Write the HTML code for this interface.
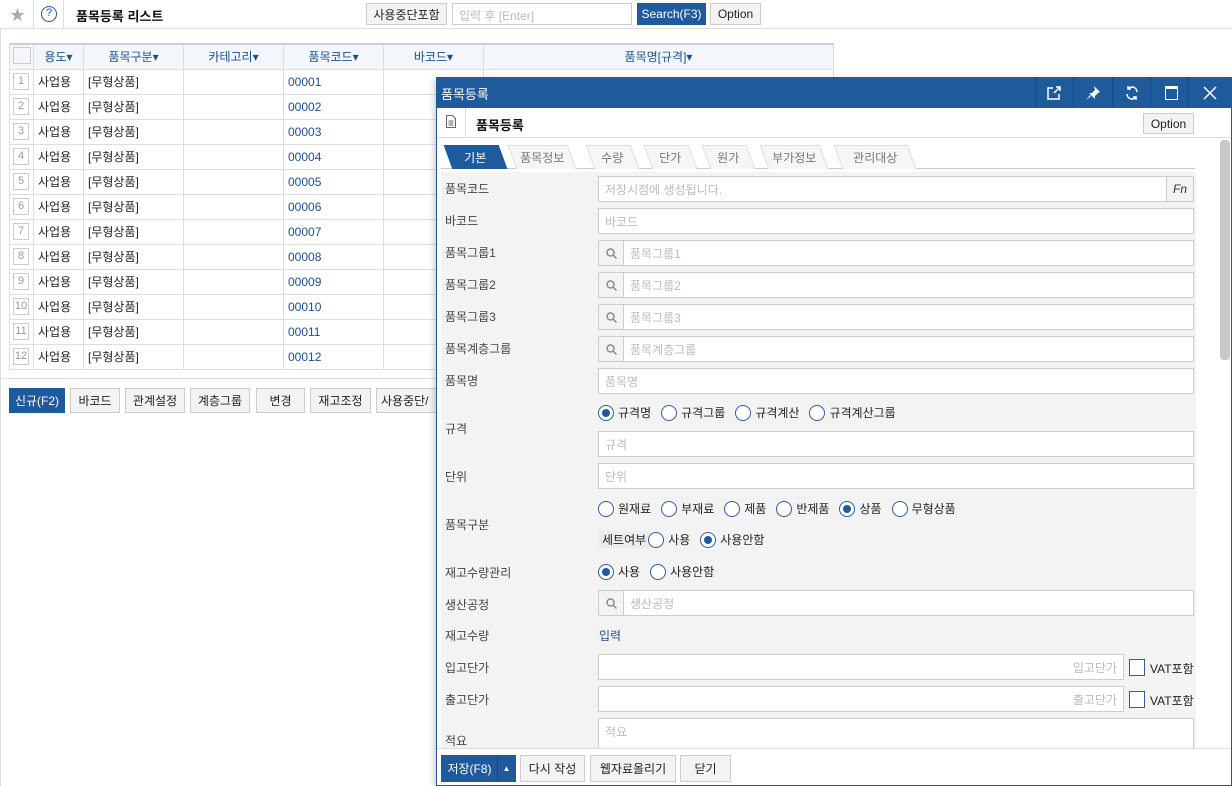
<!DOCTYPE html>
<html><head><meta charset="utf-8"><style>
*{box-sizing:border-box;margin:0;padding:0}
body{width:1232px;height:786px;overflow:hidden;background:#fff;font-family:"Liberation Sans","Noto Sans CJK KR",sans-serif;font-size:12px;color:#222;position:relative}
.a{position:absolute}
.btn{position:absolute;height:25px;border:1px solid #ccc;background:#f3f3f3;font-size:12px;display:flex;align-items:center;justify-content:center;color:#222}
.blue{background:#1e5a9c;border-color:#1e5a9c;color:#fff}
table{border-collapse:collapse;position:absolute;left:9px;top:43px;table-layout:fixed}
td,th{border:1px solid #ddd;height:25px;font-size:12px;white-space:nowrap;overflow:hidden}
th{background:#f3f6fa;color:#1e4f8c;font-weight:normal;border-top:2px solid #c5cfdb}
td{padding-left:4px}
td.n{padding:0 3px}
.nb{display:inline-block;width:16px;height:17px;border:1px solid #ccc;color:#999;font-size:11px;text-align:center;line-height:15px}
.code{color:#1e4f8c}
.lab{position:absolute;left:445px;font-size:12px;color:#444}
.inp{position:absolute;left:598px;width:596px;height:26px;border:1px solid #ccc;background:#fff;color:#bbb;font-size:12px;padding-left:6px;display:flex;align-items:center}
.srch{padding-left:0}
.srch .ic{width:25px;height:100%;border-right:1px solid #ccc;background:#f3f3f3;display:flex;align-items:center;justify-content:center;margin-right:6px}
.rads{position:absolute;left:598px;display:flex;align-items:center;font-size:12px;color:#222}
.r{width:16px;height:16px;border:1px solid #2a5e9c;border-radius:50%;background:#fff;margin-right:4px;display:inline-flex;align-items:center;justify-content:center}
.r.on::after{content:"";width:8px;height:8px;border-radius:50%;background:#1e5a9c}
.rads span.t{margin-right:10px}
.tab{position:absolute;top:145px;height:24px;font-size:12px;color:#777;display:flex;align-items:center;justify-content:center;background:#f6f6f6;border:1px solid #ddd;border-bottom:none;transform:skewX(20deg)}
.tab span{transform:skewX(-20deg)}
</style></head><body>
<!-- top bar -->
<div class="a" style="left:0;top:0;width:1232px;height:29px;border-bottom:1px solid #ddd"></div>
<div class="a" style="left:33px;top:0;width:1px;height:29px;background:#ddd"></div>
<div class="a" style="left:63px;top:0;width:1px;height:29px;background:#ddd"></div>
<div class="a" style="left:10px;top:4px;color:#aaa;font-size:15px">★</div>
<div class="a" style="left:41px;top:6px;width:16px;height:16px;border:1.5px solid #1e5a9c;border-radius:50%;color:#1e5a9c;font-size:11px;text-align:center;line-height:13px">?</div>
<div class="a" style="left:76px;top:6px;font-size:13px;font-weight:bold;color:#111">품목등록 리스트</div>
<div class="btn" style="left:366px;top:3px;width:81px;height:22px">사용중단포함</div>
<div class="a" style="left:452px;top:3px;width:180px;height:22px;border:1px solid #ccc;color:#bbb;padding:3px 6px;font-size:12px">입력 후 [Enter]</div>
<div class="btn blue" style="left:637px;top:3px;width:69px;height:22px">Search(F3)</div>
<div class="btn" style="left:710px;top:3px;width:51px;height:22px">Option</div>
<div class="a" style="left:0;top:29px;width:1px;height:757px;background:#ddd"></div>

<table>
<colgroup><col style="width:24px"><col style="width:50px"><col style="width:100px"><col style="width:100px"><col style="width:100px"><col style="width:100px"><col style="width:350px"></colgroup>
<tr><th><span class="nb" style="width:18px"></span></th><th>용도▾</th><th>품목구분▾</th><th>카테고리▾</th><th>품목코드▾</th><th>바코드▾</th><th>품목명[규격]▾</th></tr>
<tr><td class="n"><span class="nb">1</span></td><td>사업용</td><td>[무형상품]</td><td></td><td class="code">00001</td><td></td><td></td></tr>
<tr><td class="n"><span class="nb">2</span></td><td>사업용</td><td>[무형상품]</td><td></td><td class="code">00002</td><td></td><td></td></tr>
<tr><td class="n"><span class="nb">3</span></td><td>사업용</td><td>[무형상품]</td><td></td><td class="code">00003</td><td></td><td></td></tr>
<tr><td class="n"><span class="nb">4</span></td><td>사업용</td><td>[무형상품]</td><td></td><td class="code">00004</td><td></td><td></td></tr>
<tr><td class="n"><span class="nb">5</span></td><td>사업용</td><td>[무형상품]</td><td></td><td class="code">00005</td><td></td><td></td></tr>
<tr><td class="n"><span class="nb">6</span></td><td>사업용</td><td>[무형상품]</td><td></td><td class="code">00006</td><td></td><td></td></tr>
<tr><td class="n"><span class="nb">7</span></td><td>사업용</td><td>[무형상품]</td><td></td><td class="code">00007</td><td></td><td></td></tr>
<tr><td class="n"><span class="nb">8</span></td><td>사업용</td><td>[무형상품]</td><td></td><td class="code">00008</td><td></td><td></td></tr>
<tr><td class="n"><span class="nb">9</span></td><td>사업용</td><td>[무형상품]</td><td></td><td class="code">00009</td><td></td><td></td></tr>
<tr><td class="n"><span class="nb">10</span></td><td>사업용</td><td>[무형상품]</td><td></td><td class="code">00010</td><td></td><td></td></tr>
<tr><td class="n"><span class="nb">11</span></td><td>사업용</td><td>[무형상품]</td><td></td><td class="code">00011</td><td></td><td></td></tr>
<tr><td class="n"><span class="nb">12</span></td><td>사업용</td><td>[무형상품]</td><td></td><td class="code">00012</td><td></td><td></td></tr>
</table>
<div class="a" style="left:0;top:378px;width:436px;height:1px;background:#ddd"></div>
<div class="btn blue" style="left:9px;top:388px;width:56px">신규(F2)</div>
<div class="btn" style="left:70px;top:388px;width:50px">바코드</div>
<div class="btn" style="left:125px;top:388px;width:60px">관계설정</div>
<div class="btn" style="left:190px;top:388px;width:60px">계층그룹</div>
<div class="btn" style="left:256px;top:388px;width:49px">변경</div>
<div class="btn" style="left:310px;top:388px;width:61px">재고조정</div>
<div class="btn" style="left:376px;top:388px;width:70px;justify-content:flex-start;padding-left:4px">사용중단/</div>

<!-- modal -->
<div class="a" style="left:436px;top:77px;width:796px;height:709px;background:#fff;border:1px solid #1e5a9c;box-shadow:-2px 2px 6px rgba(0,0,0,.2)"></div>
<div class="a" style="left:436px;top:77px;width:796px;height:31px;background:#1e5a9c"></div>
<div class="a" style="left:441px;top:84px;color:#fff;font-size:13px">품목등록</div>
<div class="a" style="left:1035px;top:77px;width:1px;height:31px;background:#174a82"></div>
<div class="a" style="left:1073px;top:77px;width:1px;height:31px;background:#174a82"></div>
<div class="a" style="left:1112px;top:77px;width:1px;height:31px;background:#174a82"></div>
<div class="a" style="left:1150px;top:77px;width:1px;height:31px;background:#174a82"></div>
<div class="a" style="left:1188px;top:77px;width:1px;height:31px;background:#174a82"></div>
<svg class="a" style="left:1046px;top:86px" width="16" height="14" viewBox="0 0 16 14" fill="none" stroke="#fff" stroke-width="1.5"><path d="M7 2H2v11h11V8"/><path d="M8 7l6-6M10 1h4v4"/></svg>
<svg class="a" style="left:1086px;top:86px" width="14" height="14" viewBox="0 0 14 14" fill="#fff"><path d="M8 0l6 6-2 1-3 3 0 3-6-6 3 0 3-3z"/><path d="M4 9l-4 5 5-4z"/></svg>
<svg class="a" style="left:1125px;top:86px" width="14" height="14" viewBox="0 0 14 14" fill="none" stroke="#fff" stroke-width="1.5"><path d="M12 6A5 5 0 0 0 3 3M2 8a5 5 0 0 0 9 3"/><path d="M3 0v3h3M11 14v-3H8"/></svg>
<div class="a" style="left:1165px;top:86px;width:13px;height:14px;border:1.5px solid #fff;border-top-width:3px"></div>
<svg class="a" style="left:1203px;top:86px" width="14" height="14" stroke="#fff" stroke-width="1.5"><path d="M1 1l12 12M13 1L1 13"/></svg>
<!-- toolbar -->
<div class="a" style="left:437px;top:137px;width:794px;height:1px;background:#ddd"></div>
<div class="a" style="left:465px;top:108px;width:1px;height:29px;background:#ddd"></div>
<svg class="a" style="left:446px;top:115px" width="10" height="13" fill="none" stroke="#666"><path d="M.5.5h6l3 3v9h-9z M2.5 6h5M2.5 8h5M2.5 10h5"/></svg>
<div class="a" style="left:476px;top:115px;font-size:13px;font-weight:bold;color:#111">품목등록</div>
<div class="btn" style="left:1143px;top:113px;width:51px;height:21px">Option</div>
<!-- scrollbar -->
<div class="a" style="left:1220px;top:140px;width:10px;height:220px;background:#c8c8c8;border-radius:4px"></div>
<!-- tabs -->
<div class="a" style="left:441px;top:168px;width:754px;height:1px;background:#ccc"></div>
<div class="tab" style="left:512px;width:60px"><span>품목정보</span></div>
<div class="tab" style="left:590px;width:45px"><span>수량</span></div>
<div class="tab" style="left:648px;width:45px"><span>단가</span></div>
<div class="tab" style="left:706px;width:45px"><span>원가</span></div>
<div class="tab" style="left:764px;width:60px"><span>부가정보</span></div>
<div class="tab" style="left:838px;width:74px"><span>관리대상</span></div>
<div class="tab" style="left:448px;width:55px;background:#1e5a9c;border-color:#1e5a9c;color:#fff"><span>기본</span></div>
<!-- form bg -->
<div class="a" style="left:441px;top:172px;width:755px;height:576px;background:#f3f3f3"></div>

<div class="lab" style="top:180px">품목코드</div>
<div class="inp" style="top:176px">저장시점에 생성됩니다.<div style="position:absolute;right:0;top:0;width:27px;height:24px;border-left:1px solid #ccc;background:#f3f3f3;color:#333;font-style:italic;display:flex;align-items:center;justify-content:center">Fn</div></div>
<div class="lab" style="top:212px">바코드</div>
<div class="inp" style="top:208px">바코드</div>
<div class="lab" style="top:244px">품목그룹1</div>
<div class="inp srch" style="top:240px"><div class="ic"><svg width="11" height="11" fill="none" stroke="#888" stroke-width="1.4"><circle cx="4.5" cy="4.5" r="3.5"/><path d="M7 7l3.5 3.5"/></svg></div>품목그룹1</div>
<div class="lab" style="top:276px">품목그룹2</div>
<div class="inp srch" style="top:272px"><div class="ic"><svg width="11" height="11" fill="none" stroke="#888" stroke-width="1.4"><circle cx="4.5" cy="4.5" r="3.5"/><path d="M7 7l3.5 3.5"/></svg></div>품목그룹2</div>
<div class="lab" style="top:308px">품목그룹3</div>
<div class="inp srch" style="top:304px"><div class="ic"><svg width="11" height="11" fill="none" stroke="#888" stroke-width="1.4"><circle cx="4.5" cy="4.5" r="3.5"/><path d="M7 7l3.5 3.5"/></svg></div>품목그룹3</div>
<div class="lab" style="top:340px">품목계층그룹</div>
<div class="inp srch" style="top:336px"><div class="ic"><svg width="11" height="11" fill="none" stroke="#888" stroke-width="1.4"><circle cx="4.5" cy="4.5" r="3.5"/><path d="M7 7l3.5 3.5"/></svg></div>품목계층그룹</div>
<div class="lab" style="top:372px">품목명</div>
<div class="inp" style="top:368px">품목명</div>
<div class="lab" style="top:420px">규격</div>
<div class="rads" style="top:404px"><i class="r on"></i><span class="t">규격명</span><i class="r"></i><span class="t">규격그룹</span><i class="r"></i><span class="t">규격계산</span><i class="r"></i><span class="t">규격계산그룹</span></div>
<div class="inp" style="top:431px">규격</div>
<div class="lab" style="top:468px">단위</div>
<div class="inp" style="top:463px">단위</div>
<div class="lab" style="top:516px">품목구분</div>
<div class="rads" style="top:500px"><i class="r"></i><span class="t">원재료</span><i class="r"></i><span class="t">부재료</span><i class="r"></i><span class="t">제품</span><i class="r"></i><span class="t">반제품</span><i class="r on"></i><span class="t">상품</span><i class="r"></i><span class="t">무형상품</span></div>
<div class="rads" style="top:531px"><span style="background:#ececec;padding:0 2px 0 4px;margin-right:0">세트여부</span><i class="r"></i><span class="t">사용</span><i class="r on"></i><span class="t">사용안함</span></div>
<div class="lab" style="top:564px">재고수량관리</div>
<div class="rads" style="top:563px"><i class="r on"></i><span class="t">사용</span><i class="r"></i><span class="t">사용안함</span></div>
<div class="lab" style="top:596px">생산공정</div>
<div class="inp srch" style="top:590px"><div class="ic"><svg width="11" height="11" fill="none" stroke="#888" stroke-width="1.4"><circle cx="4.5" cy="4.5" r="3.5"/><path d="M7 7l3.5 3.5"/></svg></div>생산공정</div>
<div class="lab" style="top:627px">재고수량</div>
<div class="a" style="left:599px;top:627px;color:#1e4f8c">입력</div>
<div class="lab" style="top:659px">입고단가</div>
<div class="inp" style="top:654px;width:526px;justify-content:flex-end;padding-right:6px">입고단가</div>
<div class="a" style="left:1129px;top:659px;width:16px;height:17px;border:1px solid #2a5e9c;background:#fff"></div>
<div class="a" style="left:1150px;top:660px">VAT포함</div>
<div class="lab" style="top:691px">출고단가</div>
<div class="inp" style="top:686px;width:526px;justify-content:flex-end;padding-right:6px">출고단가</div>
<div class="a" style="left:1129px;top:691px;width:16px;height:17px;border:1px solid #2a5e9c;background:#fff"></div>
<div class="a" style="left:1150px;top:692px">VAT포함</div>
<div class="lab" style="top:732px">적요</div>
<div class="inp" style="top:718px;height:40px;align-items:flex-start;padding-top:4px">적요</div>
<!-- footer -->
<div class="a" style="left:437px;top:748px;width:794px;height:37px;background:#fff;border-top:1px solid #ddd"></div>
<div class="btn blue" style="left:441px;top:755px;width:57px;height:27px">저장(F8)</div>
<div class="btn blue" style="left:497px;top:755px;width:19px;height:27px;border-left:1px solid #15467c;font-size:8px">▲</div>
<div class="btn" style="left:520px;top:755px;width:65px;height:27px">다시 작성</div>
<div class="btn" style="left:590px;top:755px;width:86px;height:27px">웹자료올리기</div>
<div class="btn" style="left:680px;top:755px;width:51px;height:27px">닫기</div>
</body></html>
